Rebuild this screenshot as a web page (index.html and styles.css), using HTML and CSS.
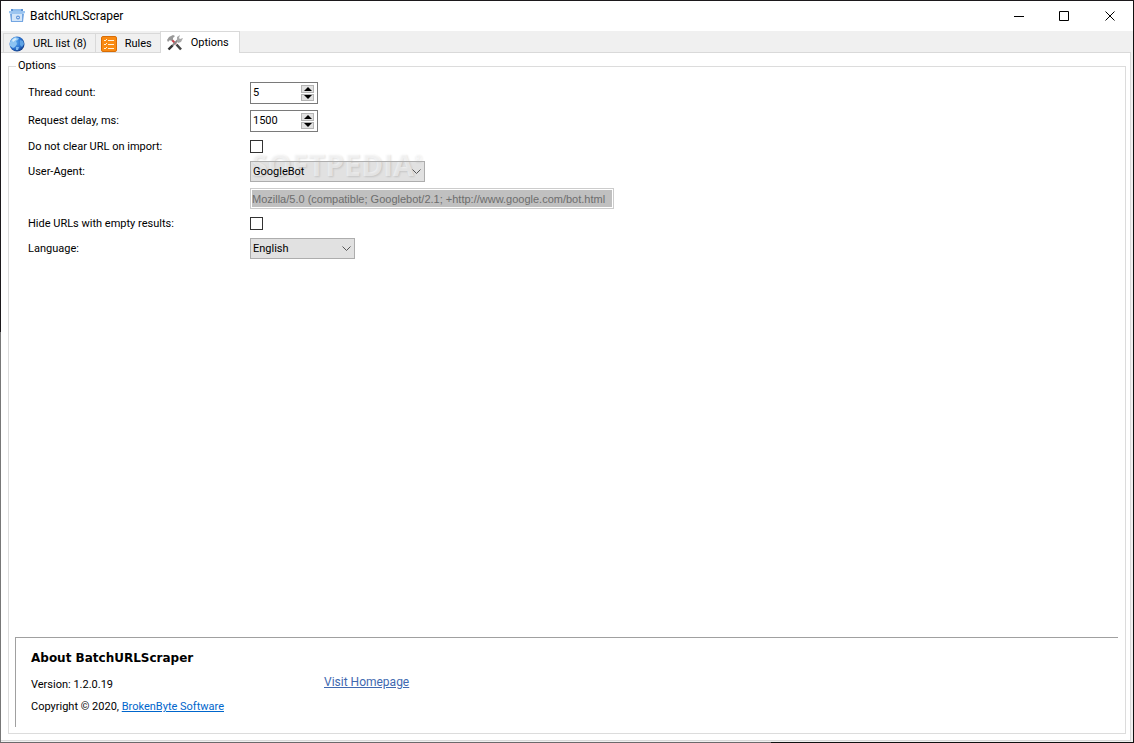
FILE: index.html
```html
<!DOCTYPE html>
<html lang="en">
<head>
    <title>BatchURLScraper</title>
    <link rel="stylesheet" href="styles.css">
    <meta charset="UTF-8" />
</head>
<body>
<div class="window">
    <header class="titlebar">
        <svg class="app_icon" viewBox="0 0 16 16" width="16" height="16">
            <path d="M2 1h12v4H2z" fill="#5b8fd0"/>
            <path d="M4 1h8v2H4z" fill="#8fbcec"/>
            <path d="M0 3h16v2l-2 1H2L0 5z" fill="#9cc5f0"/>
            <path d="M1 6h14l-1 8H2z" fill="#74a6e2"/>
            <path d="M3 6h10v7H3z" fill="#d3e5f8"/>
            <circle cx="9" cy="9.500" r="2" fill="#5f93d8"/>
            <circle cx="9" cy="9.500" r="0.8" fill="#fff"/>
        </svg>
        <h1>BatchURLScraper</h1>
        <div class="controls">
            <button type="button" aria-label="Minimize"><svg viewBox="0 0 11 11" width="11" height="11"><path d="M1 5.500h10"/></svg></button>
            <button type="button" aria-label="Maximize"><svg viewBox="0 0 11 11" width="11" height="11"><path d="M.5 .5h9v9h-9z"/></svg></button>
            <button type="button" aria-label="Close"><svg viewBox="0 0 11 11" width="11" height="11"><path d="M.5 .5l9 9M9.500 .5l-9 9"/></svg></button>
        </div>
    </header>

    <nav class="tabs">
        <button type="button" class="tab">
            <svg viewBox="0 0 16 16" width="16" height="16">
                <defs>
                    <radialGradient id="globe" cx="0.4" cy="0.4" r="0.7">
                        <stop offset="0" stop-color="#58a9f0"/>
                        <stop offset="0.6" stop-color="#2a70cc"/>
                        <stop offset="1" stop-color="#0d2c6e"/>
                    </radialGradient>
                </defs>
                <circle cx="8" cy="8" r="7.5" fill="url(#globe)"/>
                <path d="M1 6l2-3 3-2 4 1-1 2-2 1 1 3-2 3-2 1-3-2z" fill="#8cc4f2"/>
                <path d="M3 4l3-2 2 1-4 3z" fill="#d6edfc"/>
                <path d="M11 4l3 1 1 3-2 3-2-2z" fill="#5fa3e4"/>
                <path d="M7 11l3 0-1 3-2 0z" fill="#7fbaf0"/>
            </svg>
            URL list (8)
        </button>
        <button type="button" class="tab">
            <svg viewBox="0 0 16 16" width="16" height="16">
                <rect x=".5" y=".5" width="15" height="15" rx="1.5" fill="#f98a12" stroke="#d96d05"/>
                <path d="M7 4.500H13M7 8.500H13M7 12.500H13M3 4l1 1 2-2M3 8l1 1 2-2M3 12l1 1 2-2" fill="none" stroke="#fff3dc"/>
            </svg>
            Rules
        </button>
        <button type="button" class="tab active">
            <svg viewBox="0 0 16 16" width="16" height="16">
                <path d="M5 5l4 4" stroke="#c6404a" stroke-width="2"/>
                <path d="M9.500 9.500l4.500 5" stroke="#444" stroke-width="2.6"/>
                <path d="M2 14l9-9" stroke="#888" stroke-width="2"/>
                <path d="M1.500 14.500l4-4" stroke="#333" stroke-width="2.4"/>
                <path d="M0 5l2-3 4-2 2 1-2 2 0 2-2 1-1-1-2 2z" fill="#999"/>
                <path d="M10 6l0-4 3-2-1 3 1 1 3-1-2 4-3 1z" fill="#a9a9a9"/>
            </svg>
            Options
        </button>
    </nav>

    <main class="page">
        <fieldset>
            <legend>Options</legend>
            <form class="options">
                <label for="threads">Thread count:</label>
                <div class="spin">
                    <input id="threads" type="number" value="5">
                    <button type="button" class="up" aria-label="More threads"></button>
                    <button type="button" class="down" aria-label="Fewer threads"></button>
                </div>

                <label for="delay">Request delay, ms:</label>
                <div class="spin">
                    <input id="delay" type="number" value="1500">
                    <button type="button" class="up" aria-label="Longer delay"></button>
                    <button type="button" class="down" aria-label="Shorter delay"></button>
                </div>

                <label for="keep">Do not clear URL on import:</label>
                <div class="check"><input id="keep" type="checkbox"></div>

                <label for="agent">User-Agent:</label>
                <div class="combo wide">
                    <span class="watermark">SOFTPEDIA<sup>®</sup></span>
                    <select id="agent"><option>GoogleBot</option></select>
                    <svg viewBox="0 0 9 5" width="9" height="5"><path d="M.5 .5l4 4 4-4"/></svg>
                </div>

                <input class="agent_string" type="text" aria-label="User-Agent string" disabled value="Mozilla/5.0 (compatible; Googlebot/2.1; +http://www.google.com/bot.html">

                <label for="hide">Hide URLs with empty results:</label>
                <div class="check"><input id="hide" type="checkbox"></div>

                <label for="language">Language:</label>
                <div class="combo">
                    <select id="language"><option>English</option></select>
                    <svg viewBox="0 0 9 5" width="9" height="5"><path d="M.5 .5l4 4 4-4"/></svg>
                </div>
            </form>

            <section class="about">
                <h2>About BatchURLScraper</h2>
                <p>Version: 1.2.0.19</p>
                <a class="homepage" href="#">Visit Homepage</a>
                <p>Copyright © 2020, <a href="#">BrokenByte Software</a></p>
            </section>
        </fieldset>
    </main>
</div>
</body>
</html>
```

FILE: styles.css
```css
* {
    box-sizing: border-box;
}

body {
    margin: 0;
    font-family: Roboto, sans-serif;
    font-size: 11px;
    line-height: 14px;
    color: #000;
}

button, input, select {
    font: inherit;
    color: inherit;
    margin: 0;
    padding: 0;
    border: 0;
    border-radius: 0;
    background: none;
}

/* the one pixel frame is uneven, so it is painted under the padding */
.window {
    display: flex;
    flex-direction: column;
    min-height: 100vh;
    padding: 1px;
    background:
        linear-gradient(#1c191c, #1c191c) top / 100% 1px no-repeat,
        linear-gradient(#111, #111) right / 1px 100% no-repeat,
        linear-gradient(90deg, #6b696b 68%, #111 68%) bottom / 100% 1px no-repeat,
        linear-gradient(#1c191c 332px, #777 332px) left / 1px 100% no-repeat,
        #f0f0f0;
}

.titlebar {
    display: flex;
    align-items: center;
    height: 30px;
    padding-left: 8px;
    background: #fff;
}

.titlebar h1 {
    flex: 1;
    margin: 0 0 0 5px;
    font-size: 12px;
    font-weight: normal;
}

.controls {
    display: flex;
}

.controls button {
    display: flex;
    align-items: center;
    justify-content: center;
    width: 46px;
    height: 30px;
}

.controls path {
    fill: none;
    stroke: #000;
}

.tabs {
    display: flex;
    align-items: flex-end;
    height: 21px;
    padding-left: 2px;
}

.tab {
    display: flex;
    align-items: center;
    gap: 8px;
    height: 19px;
    padding: 1px 8px 0 5px;
    border: 1px solid #d9d9d9;
    border-width: 1px 0 0 1px;
    white-space: nowrap;
}

.tab.active {
    position: relative;
    height: 22px;
    margin-bottom: -1px;
    padding: 0 10px 0 6px;
    border-right-width: 1px;
    background: #fff;
}

.page {
    display: flex;
    flex: 1;
    margin: 0 2px 1px 0;
    padding: 6px 4px 6px 7px;
    border: 1px solid #d9d9d9;
    border-left: 0;
    background: #fff;
}

fieldset {
    display: flex;
    flex-direction: column;
    flex: 1;
    min-width: 0;
    margin: 0;
    padding: 9px 7px 6px 6px;
    border: 1px solid #dcdcdc;
}

legend {
    margin-left: 1px;
    padding: 0 2px;
}

.options {
    display: grid;
    grid-template-columns: 222px 1fr;
    gap: 6px 0;
    align-items: center;
    padding-left: 13px;
}

.spin {
    display: grid;
    grid-template-columns: 1fr 13px;
    row-gap: 1px;
    width: 68px;
    height: 22px;
    padding: 2px 3px 2px 2px;
    border: 1px solid #7a7a7a;
}

.spin input {
    grid-row: 1 / 3;
    width: 100%;
    height: 16px;
    padding-bottom: 2px;
    appearance: textfield;
    -moz-appearance: textfield;
}

.spin input::-webkit-inner-spin-button {
    display: none;
}

.spin button {
    display: flex;
    align-items: center;
    justify-content: center;
    border: 1px solid #b4b4b4;
    background: #e1e1e1;
}

.spin button::before {
    content: "";
    border: 4px solid transparent;
    border-top-width: 0;
    border-bottom-color: #000;
}

.spin .down::before {
    border-top: 4px solid #000;
    border-bottom: 0;
}

.check {
    display: flex;
    align-items: center;
    height: 17px;
}

.check input {
    width: 13px;
    height: 13px;
    border: 1px solid #333;
    background: #fff;
    appearance: none;
}

.combo {
    position: relative;
    display: flex;
    width: 105px;
    height: 21px;
    background: #e1e1e1;
}

.combo.wide {
    width: 175px;
}

/* no background of its own, so that the mark shows behind the text */
.combo select {
    position: relative;
    width: 100%;
    padding: 1px 0 0 2px;
    border: 1px solid #adadad;
    appearance: none;
}

.combo svg {
    position: absolute;
    top: 8px;
    right: 4px;
    fill: none;
    stroke: #555;
}

.watermark {
    position: absolute;
    top: -14px;
    left: 1px;
    font-family: "Open Sans", sans-serif;
    font-size: 30px;
    font-weight: bold;
    line-height: 36px;
    color: rgba(255, 255, 255, 0.5);
    text-shadow: 1px 1px 2px rgba(0, 0, 0, 0.12);
    pointer-events: none;
}

.watermark sup {
    font-size: 10px;
    line-height: 10px;
    vertical-align: 14px;
}

.agent_string {
    grid-column: 2;
    width: 364px;
    height: 21px;
    padding: 0 1px;
    border: 1px solid #ccc;
    outline: 1px solid #fff;
    outline-offset: -2px;
    background: #c0c0c0;
    font-family: "Liberation Sans", sans-serif;
    color: #6d6d6d;
}

.about {
    display: grid;
    grid-template-columns: 293px 1fr;
    align-content: start;
    height: 90px;
    margin-top: auto;
    padding: 12px 0 0 15px;
    border: 1px solid #a0a0a0;
    border-width: 1px 0 0 1px;
}

.about h2 {
    grid-column: 1 / 3;
    margin: 0 0 8px;
    font-family: "DejaVu Sans", sans-serif;
    font-size: 12px;
    line-height: 16px;
}

.about p {
    margin: 0;
    line-height: 22px;
}

.about a {
    color: #0066cc;
}

.about .homepage {
    font-size: 12px;
    line-height: 16px;
    color: #4169b0;
}
```
